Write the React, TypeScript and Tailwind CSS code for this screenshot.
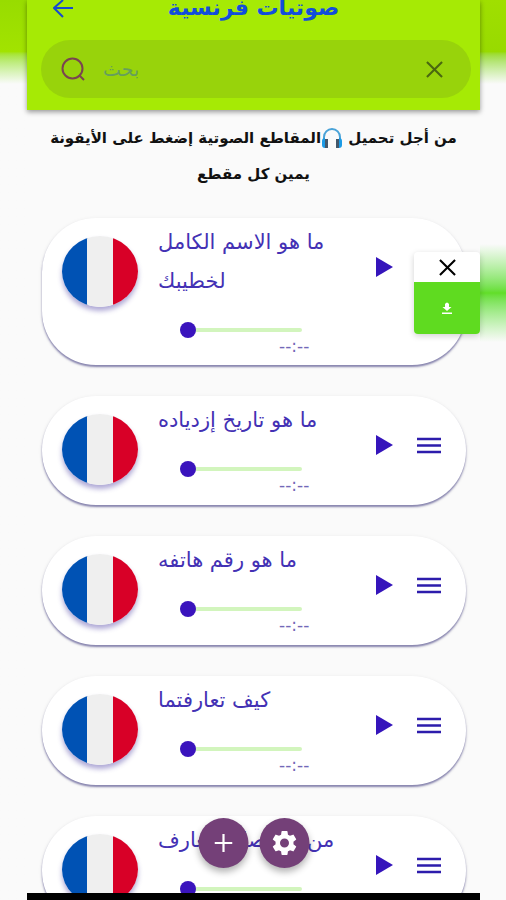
import React from "react";

const arabic = "font-['DejaVu_Sans',sans-serif]";

const tracks = [
  { title: "ما هو الاسم الكامل لخطيبك", open: true },
  { title: "ما هو تاريخ إزدياده", open: false },
  { title: "ما هو رقم هاتفه", open: false },
  { title: "كيف تعارفتما", open: false },
  { title: "من أين صار التعارف", open: false },
];

function Cross({ className }: { className: string }) {
  return (
    <svg viewBox="0 0 18 18" className={className} fill="none" stroke="currentColor" strokeWidth="2.2" aria-hidden="true">
      <path d="M1 1 17 17M17 1 1 17" />
    </svg>
  );
}

function Headphones() {
  return (
    <svg viewBox="0 0 22 22" className="inline-block size-[22px] align-middle" role="img" aria-label="سماعات">
      <path d="M3 15V9a8 8 0 0 1 16 0v6" fill="none" stroke="#4aa3d8" strokeWidth="2" />
      <path d="M1 13q0-3 3-3v10q-3 0-3-3zM21 13q0-3-3-3v10q3 0 3-3z" fill="#1c9be6" />
      <path d="M4 11h3v9H4zM15 11h3v9h-3z" fill="#44586b" />
    </svg>
  );
}

function Flag() {
  return (
    <svg viewBox="0 0 76 71" preserveAspectRatio="none" className="mt-[18px] h-[71px] w-[76px] shrink-0 rounded-[50%] shadow-[0_4px_5px_#5548a878]" role="img" aria-label="Français">
      <path fill="#0052b4" d="M0 0h26v71H0z" />
      <path fill="#efefef" d="M25 0h27v71H25z" />
      <path fill="#d80027" d="M51 0h25v71H51z" />
    </svg>
  );
}

function TrackCard({ title, open }: { title: string; open: boolean }) {
  return (
    <li
      className={`relative flex rounded-[54px] bg-white pl-5 shadow-[0_2px_2px_#4a4488a0,0_1px_4px_#00000014] ${open ? "h-[147px]" : "h-[109px]"}`}
    >
      <Flag />
      <div className="ml-5 flex w-[186px] shrink-0 flex-col">
        <h2 dir="rtl" className={`mt-[5px] text-left text-[21px] leading-[39px] text-[#4331b4] ${open ? "" : "whitespace-nowrap"} ${arabic}`}>
          <span className="inline-block max-w-[180px]">{title}</span>
        </h2>
        <label className="mt-[21px] ml-[22px] flex h-4 w-[122px] items-center">
          <input
            type="range"
            defaultValue={0}
            aria-label={title}
            className="h-1 w-full appearance-none rounded-full bg-[#d2f5bd] [&::-webkit-slider-thumb]:size-4 [&::-webkit-slider-thumb]:appearance-none [&::-webkit-slider-thumb]:rounded-full [&::-webkit-slider-thumb]:bg-[#3a14bd]"
          />
        </label>
        <span className={`ml-[121px] text-[17px] leading-4 text-[#7268b8] ${arabic}`}>--:--</span>
      </div>
      <button aria-label="تشغيل" className="mt-[38px] ml-[31px] flex h-[22px] w-[18px] shrink-0 items-center">
        <svg viewBox="0 0 18 22" className="h-[22px] w-[18px]" aria-hidden="true"><path d="M1 1v20L18 11z" fill="#3515bb" /></svg>
      </button>
      {!open && (
        <button aria-label="القائمة" className="mt-[38px] ml-6 flex h-[22px] w-6 shrink-0 items-center">
          <svg viewBox="0 0 24 22" className="h-[22px] w-6" stroke="#2d1cac" strokeWidth="2.4" aria-hidden="true"><path d="M0 5h24M0 11.500h24M0 18h24" /></svg>
        </button>
      )}
      {open && (
        <div className="absolute top-[34px] -right-[14px] w-[66px] overflow-hidden rounded bg-white shadow-[0_2px_6px_#0000002e]">
          <button aria-label="إغلاق" className="flex h-[30px] w-full items-center justify-center text-black">
            <Cross className="size-[17px]" />
          </button>
          <button aria-label="تحميل" className="flex h-[52px] w-full items-center justify-center bg-[#5fdb20] text-white">
            <svg viewBox="0 0 12 14" className="h-[14px] w-3" fill="currentColor" aria-hidden="true"><path d="M4 3q2-3 4 0v3h2.500L6 10 1.500 6H4zM1 11.500h10V13H1z" /></svg>
          </button>
        </div>
      )}
    </li>
  );
}

export default function App() {
  return (
    <div className={`flex h-screen overflow-hidden bg-[#fafafa] ${arabic}`}>
      <div className="w-[27px] shrink-0 bg-linear-to-b from-[#98dc00] from-0% via-[#a2e300] via-[52px] to-[#fafafa] to-[84px]" />
      <main className="relative flex min-w-0 flex-1 flex-col bg-[#fafafa]">
        <header className="h-[110px] shrink-0 bg-[#a6ea05] pr-[9px] pl-3.5 shadow-[0_2px_5px_#00000066]">
          <div className="relative flex h-10 items-start justify-center">
            <button aria-label="رجوع" className="absolute top-0 left-3 text-[#174bcf]">
              <svg viewBox="0 0 20 20" className="size-5" fill="none" stroke="currentColor" strokeWidth="2" aria-hidden="true"><path d="M20 8H1M10 0 1 8l9 9" /></svg>
            </button>
            <h1 dir="rtl" className="-mt-2 pr-[5px] text-[22px] leading-8 font-bold whitespace-nowrap text-[#124ddc]">صوتيات فرنسية</h1>
          </div>
          <label className="flex h-[58px] items-center rounded-full bg-[#98d30b] pr-7 pl-5">
            <svg viewBox="0 0 24 24" className="size-6 shrink-0" fill="none" stroke="#7a4550" strokeWidth="2" aria-hidden="true"><circle cx="11.500" cy="11.500" r="10" /><path d="m18 18 5 5" /></svg>
            <input type="text" placeholder="بحث" aria-label="بحث" className="ml-[18px] min-w-0 flex-1 bg-transparent text-left text-[19px] outline-none placeholder:text-[#669f5c]" />
            <button aria-label="مسح" className="text-[#4a6810]"><Cross className="size-[17px]" /></button>
          </label>
        </header>
        <p dir="rtl" className="mt-[10px] shrink-0 px-2 text-center text-[15px] leading-9 font-bold text-[#111]">
          من أجل تحميل <Headphones />المقاطع الصوتية إضغط على الأيقونة
          <br />
          يمين كل مقطع
        </p>
        <ul className="mt-[26px] flex flex-col gap-[31px] pr-3.5 pl-[15px]">
          {tracks.map((t) => <TrackCard key={t.title} {...t} />)}
        </ul>
        <nav className="absolute bottom-8 left-1/2 flex -translate-x-1/2 gap-[11px] text-white">
          <button aria-label="إضافة" className="flex size-[50px] items-center justify-center rounded-full bg-[#744078] shadow-[0_4px_7px_#0000004d]">
            <svg viewBox="0 0 18 18" className="size-[18px]" stroke="currentColor" strokeWidth="2.2" aria-hidden="true"><path d="M9 0v18M0 9h18" /></svg>
          </button>
          <button aria-label="الإعدادات" className="flex size-[50px] items-center justify-center rounded-full bg-[#744078] shadow-[0_4px_7px_#0000004d]">
            <svg viewBox="0 0 24 24" className="size-[30px]" fill="currentColor" aria-hidden="true">
              <path d="M19.140 12.940c.04-.3.060-.61.060-.94s-.02-.64-.07-.94l2.030-1.580a.49.49 0 0 0 .12-.61l-1.920-3.320a.49.49 0 0 0-.59-.22l-2.390.96a7 7 0 0 0-1.620-.94l-.36-2.540A.48.48 0 0 0 13.920 2.400h-3.840a.48.48 0 0 0-.47.410l-.36 2.540a7 7 0 0 0-1.620.94l-2.390-.96a.49.49 0 0 0-.59.220L2.740 8.870a.48.48 0 0 0 .12.610l2.030 1.580a7 7 0 0 0 0 1.880l-2.030 1.580a.49.49 0 0 0-.12.610l1.920 3.320c.12.220.37.290.59.220l2.390-.96c.5.380 1.030.7 1.620.94l.36 2.540c.05.240.24.410.47.410h3.840c.24 0 .44-.17.470-.41l.36-2.540a7 7 0 0 0 1.620-.94l2.390.96c.22.080.47 0 .59-.22l1.920-3.320a.48.48 0 0 0-.12-.61zM12 15.600a3.600 3.600 0 1 1 0-7.200 3.600 3.600 0 0 1 0 7.200z" />
            </svg>
          </button>
        </nav>
        <div className="absolute inset-x-0 bottom-0 h-[7px] bg-black" />
      </main>
      <div className="flex w-[26px] shrink-0 flex-col">
        <div className="h-[84px] bg-linear-to-b from-[#a0df00] via-[#98da00] via-[52px] to-[#fafafa]" />
        <div className="mt-[160px] h-[98px] bg-linear-to-b from-[#fafafa] via-[#62de28] to-[#fafafa]" />
      </div>
    </div>
  );
}
